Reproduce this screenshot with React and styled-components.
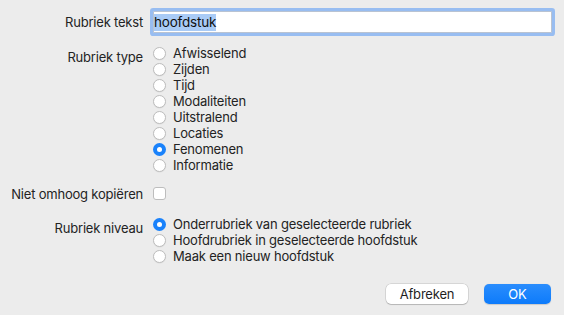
import React from "react";
import styled, { createGlobalStyle } from "styled-components";

const Global = createGlobalStyle`
  html, body { margin: 0; padding: 0; background: #ececec; }
  body { font-family: Inter, "Liberation Sans", Arial, sans-serif; }
`;

const Dialog = styled.div`
  width: 564px;
  height: 315px;
  background: #ececec;
  box-sizing: border-box;
  padding-top: 11px;
  font-size: 13px;
  letter-spacing: -0.2px;
  color: #232323;
  display: flex;
  flex-direction: column;
`;

const Row = styled.div`
  display: grid;
  grid-template-columns: 143px 1fr;
  column-gap: 10px;
  margin-top: ${(p) => p.$mt || 0}px;
  padding-right: 12px;
  align-items: ${(p) => (p.$center ? "center" : "start")};
`;

const Label = styled.div`
  text-align: right;
  line-height: 16px;
  padding-top: ${(p) => p.$pt || 0}px;
  white-space: nowrap;
`;

const Field = styled.div`
  height: 22px;
  box-sizing: border-box;
  background: #fff;
  border: 1px solid #b9c3d2;
  border-radius: 1px;
  box-shadow: 0 0 0 3px #98bdf1;
  display: flex;
  align-items: center;
  padding-left: 0;
`;

const Selected = styled.span`
  background: #a9cbf6;
  line-height: 17px;
  color: #111;
  font-size: 13.5px;
`;

const Options = styled.div`
  display: flex;
  flex-direction: column;
`;

const Option = styled.label`
  display: flex;
  align-items: center;
  height: 16px;
  gap: 7px;
  white-space: nowrap;
`;

const Radio = styled.span`
  width: 13px;
  height: 13px;
  box-sizing: border-box;
  border-radius: 50%;
  flex: none;
  background: ${(p) => (p.$on ? "#1a82fb" : "#fff")};
  border: ${(p) => (p.$on ? "none" : "1px solid #bdbdbd")};
  box-shadow: ${(p) => (p.$on ? "none" : "0 0.5px 1px rgba(0,0,0,0.08)")};
  display: flex;
  align-items: center;
  justify-content: center;
  &::after {
    content: "";
    display: ${(p) => (p.$on ? "block" : "none")};
    width: 5px;
    height: 5px;
    border-radius: 50%;
    background: #fff;
  }
`;

const Check = styled.span`
  width: 13px;
  height: 13px;
  box-sizing: border-box;
  border-radius: 3px;
  background: #fff;
  border: 1px solid #bdbdbd;
  display: block;
`;

const Buttons = styled.div`
  margin-top: auto;
  margin-bottom: 11px;
  padding-right: 13px;
  display: flex;
  justify-content: flex-end;
  gap: 16px;
`;

const Button = styled.button`
  font-family: inherit;
  font-size: 13px;
  letter-spacing: -0.2px;
  height: 20px;
  width: ${(p) => p.$w}px;
  border: none;
  border-radius: 5px;
  padding: 0;
  color: ${(p) => (p.$primary ? "#fff" : "#1f1f1f")};
  background: ${(p) =>
    p.$primary ? "linear-gradient(#2a8dfd, #0d7bfb)" : "#fff"};
  box-shadow: ${(p) =>
    p.$primary
      ? "0 0.5px 1px rgba(0,0,0,0.15)"
      : "0 0 0 0.5px rgba(0,0,0,0.18), 0 1px 1px rgba(0,0,0,0.15)"};
`;

const types = [
  "Afwisselend",
  "Zijden",
  "Tijd",
  "Modaliteiten",
  "Uitstralend",
  "Locaties",
  "Fenomenen",
  "Informatie",
];

const levels = [
  "Onderrubriek van geselecteerde rubriek",
  "Hoofdrubriek in geselecteerde hoofdstuk",
  "Maak een nieuw hoofdstuk",
];

export default function App() {
  return (
    <>
      <Global />
      <Dialog>
        <Row $center>
          <Label>Rubriek tekst</Label>
          <Field>
            <Selected>hoofdstuk</Selected>
          </Field>
        </Row>
        <Row $mt={12}>
          <Label $pt={4}>Rubriek type</Label>
          <Options>
            {types.map((t) => (
              <Option key={t}>
                <Radio $on={t === "Fenomenen"} />
                {t}
              </Option>
            ))}
          </Options>
        </Row>
        <Row $mt={11} $center>
          <Label $pt={2}>Niet omhoog kopiëren</Label>
          <Check />
        </Row>
        <Row $mt={14}>
          <Label $pt={4}>Rubriek niveau</Label>
          <Options>
            {levels.map((t, i) => (
              <Option key={t}>
                <Radio $on={i === 0} />
                {t}
              </Option>
            ))}
          </Options>
        </Row>
        <Buttons>
          <Button $w={82}>Afbreken</Button>
          <Button $w={67} $primary>
            OK
          </Button>
        </Buttons>
      </Dialog>
    </>
  );
}
